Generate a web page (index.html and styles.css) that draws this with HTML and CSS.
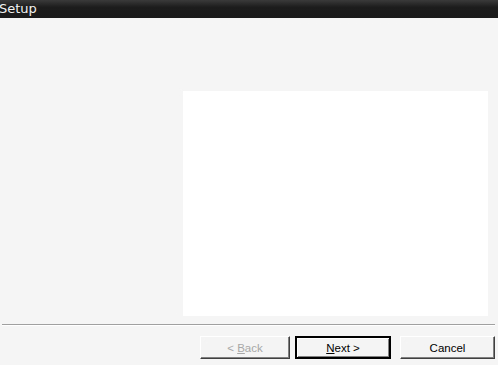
FILE: index.html
```html
<!DOCTYPE html>
<html lang="en">
<head>
  <meta charset="UTF-8" />
  <title>Setup</title>
  <link rel="stylesheet" href="styles.css">
</head>
<body>
  <div class="window">
    <div class="titlebar">Setup</div>
    <div class="content">
      <div class="panel"></div>
    </div>
    <div class="separator"></div>
    <div class="buttons">
      <button class="btn" disabled>&lt; <u>B</u>ack</button>
      <button class="btn default"><u>N</u>ext &gt;</button>
      <button class="btn">Cancel</button>
    </div>
  </div>
</body>
</html>
```

FILE: styles.css
```css
* {
  margin: 0;
  padding: 0;
  box-sizing: border-box;
}
html, body {
  width: 498px;
  height: 365px;
  overflow: hidden;
  background: #f5f5f5;
  font-family: 'DejaVu Sans', 'Liberation Sans', sans-serif;
}
.window {
  display: flex;
  flex-direction: column;
  height: 100%;
}
.titlebar {
  height: 18px;
  line-height: 17px;
  margin-left: -1px;
  background: linear-gradient(#3a3a3a, #1c1c1c 40%, #1a1a1a);
  color: #f2f2f2;
  font-size: 13px;
}
.content {
  padding: 73px 10px 0 183px;
}
.panel {
  height: 225px;
  background: #fff;
}
.separator {
  margin: 8px 3px 0 2px;
  height: 2px;
  border-top: 1px solid #a0a0a0;
  border-bottom: 1px solid #fff;
}
.buttons {
  display: flex;
  justify-content: flex-end;
  gap: 5px;
  padding: 10px 3px 0 0;
}
.btn {
  width: 90px;
  height: 23px;
  font-family: 'Liberation Sans', Arial, sans-serif;
  font-size: 11.5px;
  color: #000;
  background: #f4f4f4;
  border: 1px solid;
  border-color: #fff #404040 #404040 #fff;
  box-shadow: inset -1px -1px 0 #808080;
}
.btn:disabled {
  color: #a8a8a8;
}
.btn.default {
  width: 96px;
  border: 2px solid #000;
  box-shadow: inset 1px 1px 0 #fff, inset -1px -1px 0 #808080;
  margin-right: 4px;
}
.btn:last-child {
  width: 95px;
}
```
